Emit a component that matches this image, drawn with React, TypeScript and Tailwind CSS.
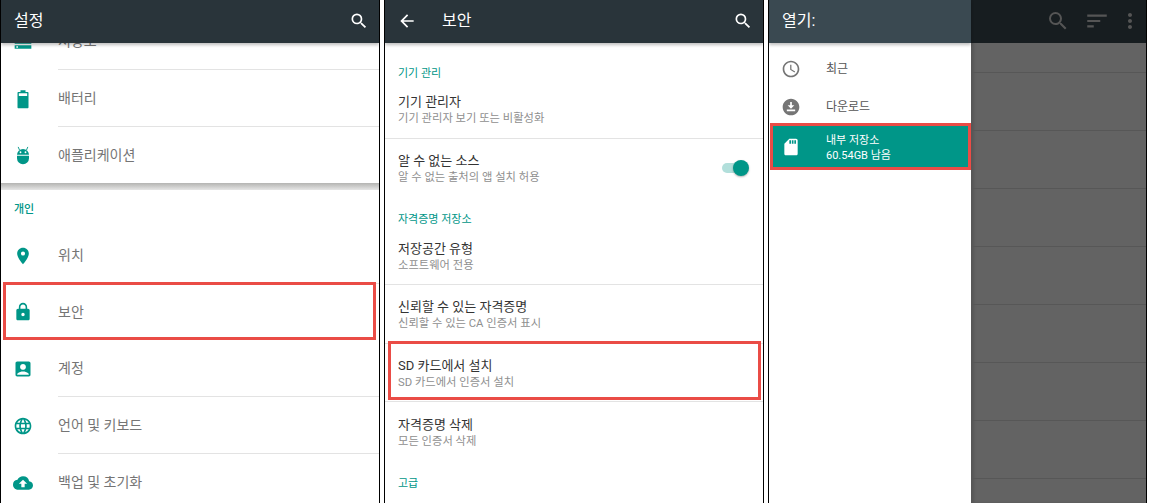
import React from 'react';
import {
  MdSearch,
  MdArrowBack,
  MdStorage,
  MdPlace,
  MdLock,
  MdAccountBox,
  MdLanguage,
  MdCloudUpload,
  MdAccessTime,
  MdDownloadForOffline,
  MdSdStorage,
  MdSort,
  MdMoreVert,
} from 'react-icons/md';

function BatteryIcon() {
  return (
    <svg width="20" height="20" viewBox="0 0 24 24" fill="#009688">
      <path
        fillRule="evenodd"
        d="M9 1.500h6v2h2.400c.7 0 1.200.5 1.200 1.200v17.100c0 .7-.5 1.200-1.200 1.200H6.600c-.7 0-1.200-.5-1.200-1.200V4.700c0-.7.5-1.200 1.200-1.200H9zM7 5.200v3.300h10V5.200z"
      />
    </svg>
  );
}

function AndroidIcon() {
  return (
    <svg width="20" height="20" viewBox="0 0 24 24" fill="#009688">
      <path d="M4.800 11.800a7.200 7 0 0 1 14.400 0z" />
      <path d="M7.800 6 6.200 2.300M16.200 6l1.600-3.700" stroke="#009688" strokeWidth="1.100" />
      <circle cx="9" cy="8.700" r="1.100" fill="#ffffff" />
      <circle cx="15" cy="8.700" r="1.100" fill="#ffffff" />
      <path d="M4.800 12.900h14.400v3a7.200 7.200 0 0 1-14.400 0z" />
    </svg>
  );
}

function SettingRow({ icon, label, last }: { icon: React.ReactNode; label: string; last?: boolean }) {
  return (
    <div className={`flex items-stretch shrink-0 ${last ? 'h-[56px]' : 'h-[57px]'}`}>
      <div className="w-[57px] shrink-0 flex items-center pl-[12px]">{icon}</div>
      <div className={`flex-1 flex items-center text-[14px] text-[#757575] ${last ? '' : 'border-b border-[#e3e3e3]'}`}>
        {label}
      </div>
    </div>
  );
}

function SecurityRow({ title, sub, divider, children }: { title: string; sub: string; divider?: boolean; children?: React.ReactNode }) {
  return (
    <div className={`h-[58.500px] shrink-0 flex items-center justify-between pl-[13px] pr-[15px] ${divider ? 'border-b border-[#e3e3e3]' : ''}`}>
      <div className="pt-[3px]">
        <div className="text-[13px] leading-[17px] text-[#333333]">{title}</div>
        <div className="text-[11.300px] leading-[17px] text-[#8f8f8f]">{sub}</div>
      </div>
      {children}
    </div>
  );
}

function AppBar({ children, className }: { children: React.ReactNode; className: string }) {
  return (
    <div className={`relative z-10 h-[43px] shrink-0 flex items-center pb-[2px] text-white text-[16px] shadow-[0_2px_3px_rgba(0,0,0,0.25)] ${className}`}>
      {children}
    </div>
  );
}

export default function App() {
  const firstRows = [
    { icon: <MdStorage size={20} color="#009688" />, label: '저장소' },
    { icon: <BatteryIcon />, label: '배터리' },
    { icon: <AndroidIcon />, label: '애플리케이션', last: true },
  ];

  const dimRows = [0, 1, 2, 3, 4, 5, 6, 7];

  return (
    <div className="w-[1149px] h-[503px] overflow-hidden bg-white flex gap-[4px] font-['Roboto','Noto_Sans_CJK_KR',sans-serif]">
      {/* Settings */}
      <div className="w-[380px] h-full border-x border-black flex flex-col overflow-hidden">
        <AppBar className="bg-[#29343a] justify-between pl-[13px] pr-[10px]">
          <span>설정</span>
          <MdSearch size={20} />
        </AppBar>
        <div className="-mt-[30px] shrink-0">
          {firstRows.map((row) => (
            <SettingRow key={row.label} icon={row.icon} label={row.label} last={row.last} />
          ))}
        </div>
        <div className="h-[7px] shrink-0 bg-gradient-to-b from-[#b4b4b2] to-[#e6e6e6]" />
        <div className="h-[37px] shrink-0 pl-[13px] pt-[12px] text-[11px] leading-[16px] font-medium text-[#009688]">개인</div>
        <SettingRow icon={<MdPlace size={20} color="#009688" />} label="위치" />
        <div className="relative shrink-0">
          <SettingRow icon={<MdLock size={20} color="#009688" />} label="보안" last />
          <div className="absolute left-[2px] right-[3px] -top-[2px] bottom-0 border-[3px] border-[#ea4c46]" />
        </div>
        <SettingRow icon={<MdAccountBox size={20} color="#009688" />} label="계정" />
        <SettingRow icon={<MdLanguage size={20} color="#009688" />} label="언어 및 키보드" />
        <SettingRow icon={<MdCloudUpload size={20} color="#009688" />} label="백업 및 초기화" />
      </div>

      {/* Security */}
      <div className="w-[380px] h-full border-x border-black flex flex-col overflow-hidden">
        <AppBar className="bg-[#29343a] pl-[12px] pr-[10px]">
          <MdArrowBack size={20} />
          <span className="ml-[25px] flex-1">보안</span>
          <MdSearch size={20} />
        </AppBar>
        <div className="h-[37px] shrink-0 pl-[13px] pt-[21px] text-[11px] leading-[16px] text-[#009688]">
          <div className="pt-[2px]">기기 관리</div>
        </div>
        <SecurityRow title="기기 관리자" sub="기기 관리자 보기 또는 비활성화" divider />
        <SecurityRow title="알 수 없는 소스" sub="알 수 없는 출처의 앱 설치 허용">
          <div className="relative w-[26px] h-[10px] rounded-full bg-[#b2dfdb]">
            <div className="absolute -right-[1px] -top-[3px] w-[16px] h-[16px] rounded-full bg-[#009688] shadow-[0_1px_2px_rgba(0,0,0,0.3)]" />
          </div>
        </SecurityRow>
        <div className="h-[29.500px] shrink-0 pl-[13px] pt-[16px] text-[11px] leading-[13.500px] text-[#009688]">자격증명 저장소</div>
        <SecurityRow title="저장공간 유형" sub="소프트웨어 전용" divider />
        <SecurityRow title="신뢰할 수 있는 자격증명" sub="신뢰할 수 있는 CA 인증서 표시" divider />
        <div className="relative shrink-0">
          <SecurityRow title="SD 카드에서 설치" sub="SD 카드에서 인증서 설치" divider />
          <div className="absolute left-[3px] right-[2px] -top-[3px] bottom-[2px] border-[3px] border-[#ea4c46]" />
        </div>
        <SecurityRow title="자격증명 삭제" sub="모든 인증서 삭제" />
        <div className="h-[37px] shrink-0 pl-[13px] pt-[15px] text-[11px] leading-[16px] text-[#009688]">고급</div>
      </div>

      {/* File picker with dimmed list behind the drawer */}
      <div className="w-[379px] h-full border-x border-black flex overflow-hidden">
        <div className="w-[202px] shrink-0 flex flex-col bg-white">
          <AppBar className="bg-[#3a4951] pl-[13px]">
            <span>열기:</span>
          </AppBar>
          <div className="h-[81px] shrink-0 flex flex-col pt-[7px]">
            <div className="h-[38px] shrink-0 flex items-center text-[12px] text-[#555555]">
              <div className="w-[57px] shrink-0 pl-[12px]">
                <MdAccessTime size={20} color="#757575" />
              </div>
              최근
            </div>
            <div className="h-[38px] shrink-0 flex items-center text-[12px] text-[#555555]">
              <div className="w-[57px] shrink-0 pl-[12px]">
                <MdDownloadForOffline size={20} color="#757575" />
              </div>
              다운로드
            </div>
          </div>
          <div className="h-[47px] shrink-0 flex items-center bg-[#009688] border-[3px] border-[#ea4c46] text-white text-[11px] leading-[15px] -mt-[1px] ml-[1px]">
            <div className="w-[53px] shrink-0 pl-[8px]">
              <MdSdStorage size={20} color="#ffffff" />
            </div>
            <div className="pt-[3px]">
              <div>내부 저장소</div>
              <div>60.54GB 남음</div>
            </div>
          </div>
        </div>
        <div className="flex-1 flex flex-col bg-[#636363] shadow-[inset_3px_0_3px_rgba(0,0,0,0.12)]">
          <div className="h-[43px] shrink-0 flex items-center justify-end pr-[4px] pb-[2px] bg-[#171d20] text-[#555555]">
            <MdSearch size={24} />
            <MdSort size={26} className="ml-[14px]" />
            <MdMoreVert size={24} className="ml-[8px]" />
          </div>
          <div className="-mt-[28px] shrink-0">
            {dimRows.map((row) => (
              <div key={row} className="h-[58px] border-b border-[#575757]" />
            ))}
          </div>
        </div>
      </div>
    </div>
  );
}
